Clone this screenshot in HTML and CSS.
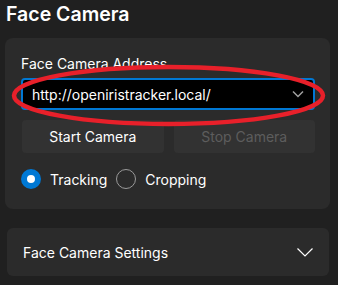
FILE: index.html
```html
<!DOCTYPE html>
<html>
<head>
<meta charset="utf-8">
<link rel="stylesheet" href="styles.css">
</head>
<body>
<div class="page">
  <h1 class="title">Face Camera</h1>
  <section class="card">
    <div class="label">Face Camera Address</div>
    <div class="select">
      <span class="select-text">http://openiristracker.local/</span>
      <svg class="select-chev" width="12" height="8" viewBox="0 0 12 8"><path d="M1 1.5 L6 6.5 L11 1.5" fill="none" stroke="#a0a0a0" stroke-width="1.5"/></svg>
    </div>
    <div class="buttons">
      <div class="btn">Start Camera</div>
      <div class="btn btn-disabled">Stop Camera</div>
    </div>
    <div class="radios">
      <div class="radio"><span class="dot dot-on"></span><span>Tracking</span></div>
      <div class="radio"><span class="dot"></span><span>Cropping</span></div>
    </div>
  </section>
  <section class="expander">
    <span>Face Camera Settings</span>
    <svg width="16" height="9" viewBox="0 0 16 9"><path d="M0.5 0.5 L8 8 L15.5 0.5" fill="none" stroke="#ffffff" stroke-width="1.2"/></svg>
  </section>
  <svg class="annot" width="338" height="285" viewBox="0 0 338 285"><ellipse cx="168.5" cy="95.5" rx="154.5" ry="28.5" fill="none" stroke="#e8202a" stroke-width="4.5"/></svg>
</div>
</body>
</html>
```
FILE: styles.css
```css
html, body {
  margin: 0;
  padding: 0;
  background: #202020;
}
.page {
  position: relative;
  width: 338px;
  height: 285px;
  overflow: hidden;
  font-family: "Inter", "Liberation Sans", sans-serif;
  color: #ffffff;
}
.title {
  margin: 0;
  padding: 1px 0 0 6px;
  height: 38px;
  box-sizing: border-box;
  font-size: 19.5px;
  font-weight: 600;
  line-height: 26px;
}
.card {
  margin: 0 8px 0 5px;
  background: #2b2b2b;
  border-radius: 8px;
  padding: 17px 15px 20px 16px;
  height: 171px;
  box-sizing: border-box;
}
.label {
  font-size: 14px;
  line-height: 18px;
  height: 23px;
}
.select {
  height: 32px;
  box-sizing: border-box;
  border: 2px solid #0078d4;
  border-radius: 4px;
  background: #000;
  display: flex;
  align-items: center;
  justify-content: space-between;
  padding: 0 9px 0 9px;
}
.select-text {
  font-size: 14px;
}
.buttons {
  display: flex;
  gap: 10px;
  margin-top: 10px;
  margin-left: 1px;
}
.btn {
  flex: 1;
  height: 33px;
  background: #323232;
  border-radius: 4px;
  display: flex;
  align-items: center;
  justify-content: center;
  font-size: 14px;
}
.btn-disabled {
  color: #5d5d5d;
}
.radios {
  display: flex;
  align-items: center;
  margin-top: 16px;
  gap: 9px;
}
.radio {
  display: flex;
  align-items: center;
  gap: 9px;
  font-size: 14px;
}
.dot {
  width: 20px;
  height: 20px;
  box-sizing: border-box;
  border-radius: 50%;
  border: 1px solid #9a9a9a;
}
.dot-on {
  border: 6px solid #0078d4;
  background: #fff;
}
.expander {
  margin: 19px 9px 0 7px;
  height: 48px;
  background: #2b2b2b;
  border-radius: 6px;
  display: flex;
  align-items: center;
  justify-content: space-between;
  padding: 0 16px;
  font-size: 14px;
}
.annot {
  position: absolute;
  left: 0;
  top: 0;
  pointer-events: none;
}
```
